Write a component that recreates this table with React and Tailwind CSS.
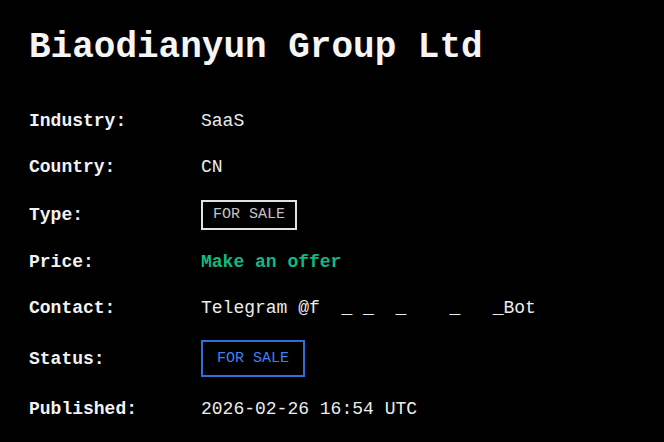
import React from "react";

const rows = [
  { label: "Industry:", value: "SaaS" },
  { label: "Country:", value: "CN" },
  { label: "Type:", type: "badge" },
  { label: "Price:", type: "price", value: "Make an offer" },
  { label: "Contact:", value: "Telegram @f  _ _  _    _   _Bot" },
  { label: "Status:", type: "status" },
  { label: "Published:", value: "2026-02-26 16:54 UTC" },
];

const Value = ({ row }) => {
  if (row.type === "badge") {
    return (
      <span className="inline-block border-2 border-[#e2e2e2] px-[10px] py-[4px] text-[15px] leading-[18px] text-[#c4c4c4]">
        FOR SALE
      </span>
    );
  }
  if (row.type === "status") {
    return (
      <span className="inline-block border-2 border-[#2f6fdc] px-[14px] py-[7px] text-[15px] leading-[19px] text-[#3b82f6]">
        FOR SALE
      </span>
    );
  }
  if (row.type === "price") {
    return <span className="font-bold text-[#10b981]">{row.value}</span>;
  }
  return <span className="whitespace-pre text-[#ececec]">{row.value}</span>;
};

const App = () => {
  return (
    <div
      className="min-h-screen w-full bg-black pl-[29px] pt-[27px] text-white"
      style={{
        fontFamily:
          '"Courier New", "Nimbus Mono PS", "FreeMono", Courier, "Liberation Mono", monospace',
      }}
    >
      <h1 className="text-[36px] leading-[41px] font-bold text-[#f5f5f5]">
        Biaodianyun Group Ltd
      </h1>

      <div className="mt-[39px] flex flex-col gap-[18px] text-[18px]">
        {rows.map((row) => (
          <div
            key={row.label}
            className="grid min-h-[28px] grid-cols-[172px_1fr] items-center leading-[28px]"
          >
            <span className="font-bold text-[#f2f2f2]">{row.label}</span>
            <div>
              <Value row={row} />
            </div>
          </div>
        ))}
      </div>
    </div>
  );
};

export default App;
